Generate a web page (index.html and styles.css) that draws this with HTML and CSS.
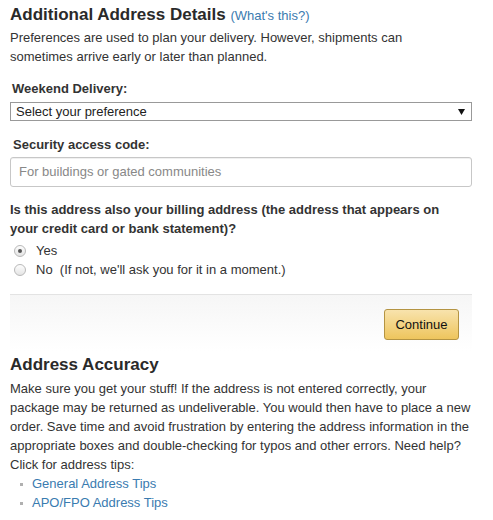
FILE: index.html
```html
<!DOCTYPE html>
<html>
<head>
<meta charset="utf-8">
<link rel="stylesheet" href="styles.css">
</head>
<body>
<div class="page">
  <h2 class="title">Additional Address Details <a class="what" href="#">(What's this?)</a></h2>
  <p class="intro">Preferences are used to plan your delivery. However, shipments can sometimes arrive early or later than planned.</p>

  <label class="label lbl-weekend">Weekend Delivery:</label>
  <div class="select">
    <span>Select your preference</span>
    <svg class="arrow" width="7" height="6" viewBox="0 0 7 6"><path d="M0 0H7L3.5 6Z" fill="#111"/></svg>
  </div>

  <label class="label lbl-security">Security access code:</label>
  <div class="input">For buildings or gated communities</div>

  <p class="question">Is this address also your billing address (the address that appears on your credit card or bank statement)?</p>
  <div class="radios">
    <div class="radio-row"><span class="radio checked"></span><span>Yes</span></div>
    <div class="radio-row"><span class="radio"></span><span>No&nbsp; (If not, we'll ask you for it in a moment.)</span></div>
  </div>

  <div class="panel">
    <button class="btn">Continue</button>
  </div>

  <h3 class="subtitle">Address Accuracy</h3>
  <p class="body">Make sure you get your stuff! If the address is not entered correctly, your package may be returned as undeliverable. You would then have to place a new order. Save time and avoid frustration by entering the address information in the appropriate boxes and double-checking for typos and other errors. Need help? Click for address tips:</p>
  <ul class="tips">
    <li><a href="#">General Address Tips</a></li>
    <li><a href="#">APO/FPO Address Tips</a></li>
  </ul>
</div>
</body>
</html>
```

FILE: styles.css
```css
html, body {
  margin: 0;
  padding: 0;
  background: #fff;
}
body {
  font-family: "Liberation Sans", Arial, sans-serif;
  font-size: 13px;
  line-height: 19px;
  color: #333;
}
.page {
  width: 462px;
  padding: 0 0 0 10px;
}
.title {
  margin: 0;
  padding-top: 3px;
  font-size: 17px;
  line-height: 24px;
  font-weight: bold;
  color: #2a2a2a;
}
.what {
  font-size: 13px;
  font-weight: normal;
  color: #3a7bb0;
  text-decoration: none;
}
.intro {
  margin: 0;
  width: 420px;
}
.label {
  display: block;
  font-weight: bold;
  padding-left: 2px;
}
.lbl-weekend {
  margin-top: 13px;
}
.select {
  margin-top: 4px;
  height: 17px;
  border: 1px solid #999;
  display: flex;
  align-items: center;
  justify-content: space-between;
  padding: 0 6px 0 5px;
  line-height: 17px;
  color: #222;
}
.lbl-security {
  margin-top: 14px;
  padding-left: 3px;
}
.input {
  margin-top: 3px;
  height: 28px;
  line-height: 28px;
  border: 1px solid #c7c7c7;
  border-radius: 3px;
  padding-left: 8px;
  color: #888;
  box-shadow: inset 0 1px 0 rgba(0,0,0,.06);
}
.question {
  margin: 13px 0 0;
  width: 450px;
  font-weight: bold;
}
.radios {
  margin-top: 3px;
}
.radio-row {
  display: flex;
  align-items: center;
  height: 19px;
  padding-left: 4px;
}
.radio {
  width: 12px;
  height: 12px;
  border-radius: 50%;
  border: 1px solid #b9b9b9;
  background: linear-gradient(#fdfdfd, #e4e4e4);
  margin-right: 10px;
  position: relative;
  box-sizing: border-box;
}
.radio.checked::after {
  content: "";
  position: absolute;
  left: 3px;
  top: 3px;
  width: 4px;
  height: 4px;
  border-radius: 50%;
  background: #555;
}
.panel {
  margin-top: 15px;
  border-top: 1px solid #e3e3e3;
  background: linear-gradient(#f6f6f6, #fff);
  height: 56px;
  display: flex;
  justify-content: flex-end;
  align-items: flex-start;
  padding-right: 13px;
}
.btn {
  margin-top: 14px;
  width: 75px;
  height: 31px;
  border: 1px solid #b49443;
  border-radius: 3px;
  background: linear-gradient(#f8e3ad, #eec55d);
  font-family: "Liberation Sans", Arial, sans-serif;
  font-size: 13px;
  color: #111;
  padding: 0;
}
.subtitle {
  margin: 3px 0 0;
  font-size: 17px;
  line-height: 22px;
  font-weight: bold;
  color: #2a2a2a;
}
.body {
  margin: 3px 0 0;
}
.tips {
  margin: 0;
  padding: 0 0 0 22px;
  list-style: none;
}
.tips li {
  position: relative;
}
.tips li::before {
  content: "";
  position: absolute;
  left: -12px;
  top: 9px;
  width: 3px;
  height: 3px;
  background: #b0b0b0;
}
.tips a {
  color: #3a7bb0;
  text-decoration: none;
}
```
